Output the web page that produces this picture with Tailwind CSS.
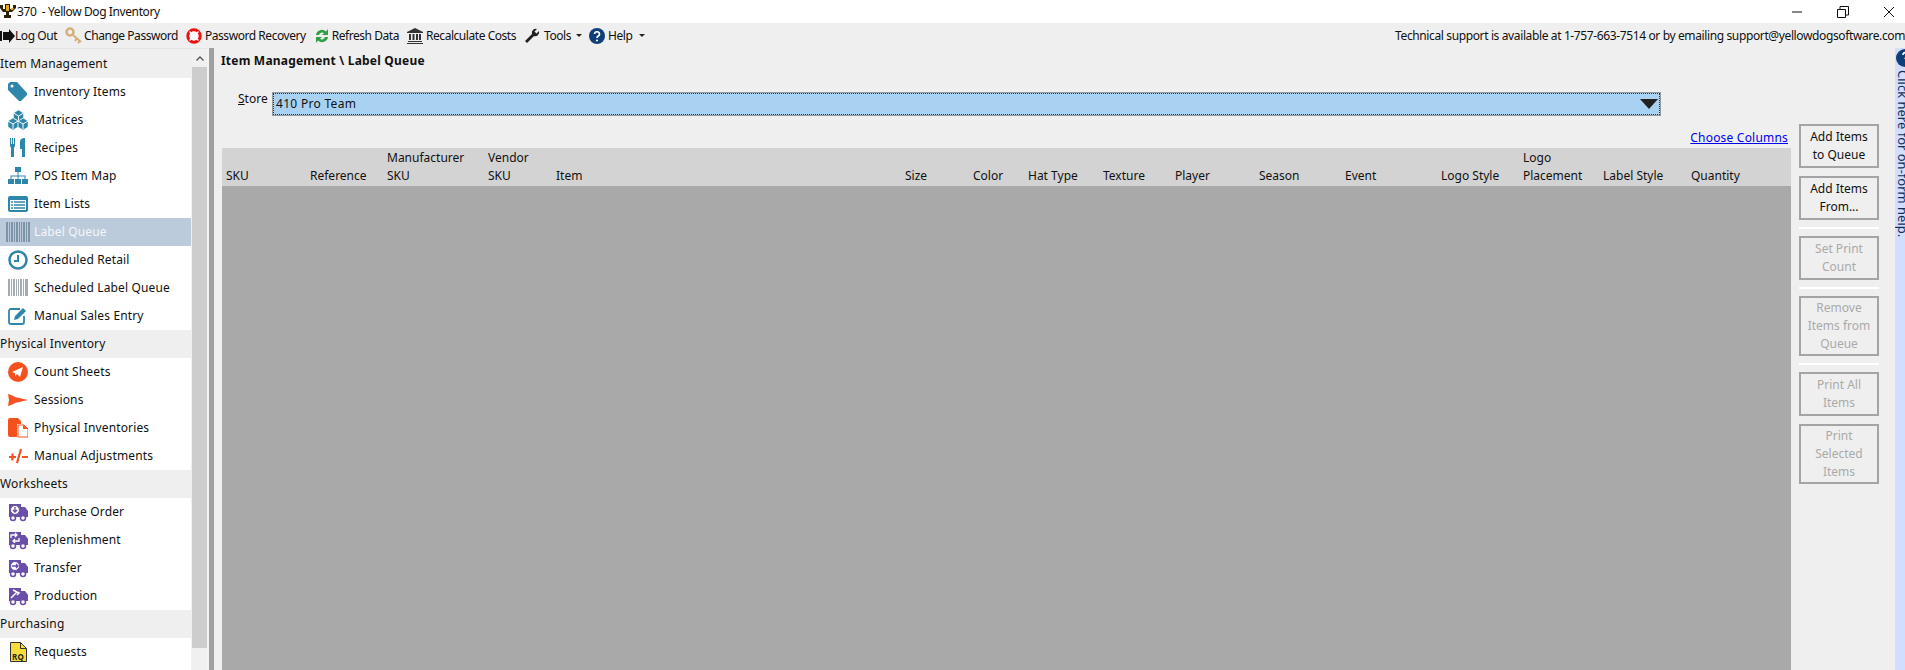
<!DOCTYPE html>
<html lang="en">
<head>
  <meta charset="UTF-8" />
  <title>370 - Yellow Dog Inventory</title>
  <script src="https://cdn.jsdelivr.net/npm/@tailwindcss/browser@4"></script>
</head>
<body class="h-[670px] w-[1905px] overflow-hidden bg-[#efefef] font-['Noto_Sans',sans-serif] text-[12px] leading-[16px] text-[#111]">

  <!-- title bar -->
  <div class="flex h-[23px] items-center bg-white">
    <svg class="h-[16px] w-[16px] shrink-0" viewBox="0 0 16 16"><path d="M0 1h3v4h2V0h5v5h3V1h3v3l-4 4h-3v3h2v3H4v-3h2V8H3L0 4z" fill="#2a2208"/><path d="M6 1h3v6H6z" fill="#e0a91c"/><path d="M11 4h3l-1 2h-2z" fill="#e0a91c"/></svg>
    <span class="ml-[1px] whitespace-pre tracking-[-0.4px]">370  - Yellow Dog Inventory</span>
    <div class="ml-auto flex h-full items-center">
      <svg class="mr-[34px] h-[12px] w-[12px]" viewBox="0 0 12 12"><path d="M1 6h10" stroke="#111" fill="none"/></svg>
      <svg class="mr-[34px] h-[12px] w-[12px]" viewBox="0 0 12 12"><path d="M.5 3.500h8v8h-8zM3 3V.5h8.500V9H9" stroke="#111" fill="none"/></svg>
      <svg class="mr-[10px] h-[12px] w-[12px]" viewBox="0 0 12 12"><path d="M1 1l10 10M11 1L1 11" stroke="#111" fill="none"/></svg>
    </div>
  </div>

  <!-- toolbar -->
  <div class="flex h-[25px] items-center whitespace-nowrap tracking-[-0.45px]">
    <div class="flex items-center">
      <svg class="h-[14px] w-[15px]" viewBox="0 0 15 14"><path d="M3 3h6V0l6 7-6 7v-3H3z" fill="#111"/><path d="M0 2h2v10H0z" fill="#111"/></svg>
      <span>Log Out</span>
    </div>
    <div class="ml-[8px] flex items-center gap-[2px]">
      <svg class="h-[17px] w-[17px]" viewBox="0 0 17 17"><circle cx="5" cy="5" r="3.500" fill="none" stroke="#d4b078" stroke-width="2.500"/><path d="M8 8l8 7M12 11l-2 3M15 14l-2 2" stroke="#d4b078" stroke-width="2" fill="none"/></svg>
      <span>Change Password</span>
    </div>
    <div class="ml-[8px] flex items-center gap-[3px]">
      <svg class="h-[16px] w-[16px]" viewBox="0 0 16 16"><circle cx="8" cy="8" r="6.200" fill="#fff" stroke="#ee1111" stroke-width="3"/><path d="M3.500 3.500l2 2M12.500 3.500l-2 2M3.500 12.500l2-2M12.500 12.500l-2-2" stroke="#fff" stroke-width="1.400"/></svg>
      <span>Password Recovery</span>
    </div>
    <div class="ml-[8px] flex items-center gap-[2px]">
      <svg class="h-[16px] w-[16px]" viewBox="0 0 16 16"><path d="M2 7a6 6 0 0 1 10-3.500L14 1v6H8l2-2a3.500 3.500 0 0 0-5 2z" fill="#2f9e44"/><path d="M14 9a6 6 0 0 1-10 3.500L2 15V9h6l-2 2a3.500 3.500 0 0 0 5-2z" fill="#2f9e44"/></svg>
      <span>Refresh Data</span>
    </div>
    <div class="ml-[8px] flex items-center gap-[3px]">
      <svg class="h-[16px] w-[16px]" viewBox="0 0 16 16"><path d="M8 0l8 4v1H0V4zM2 6h2v6H2zM5.500 6h2v6h-2zM9 6h2v6H9zM12 6h2v6h-2zM1 13h14v1H1zM0 15h16v1H0z" fill="#333"/></svg>
      <span>Recalculate Costs</span>
    </div>
    <div class="ml-[8px] flex items-center gap-[4px]">
      <svg class="h-[16px] w-[16px]" viewBox="0 0 16 16"><path d="M1 13l7-7a4 4 0 0 1 5-5l-2.500 2.500 2 2L15 3a4 4 0 0 1-5 5l-7 7z" fill="#222"/></svg>
      <span>Tools</span>
      <svg class="ml-[1px] h-[3px] w-[6px]" viewBox="0 0 6 3"><path d="M0 0h6L3 3z" fill="#222"/></svg>
    </div>
    <div class="ml-[7px] flex items-center gap-[3px]">
      <svg class="h-[16px] w-[16px]" viewBox="0 0 16 16"><circle cx="8" cy="8" r="8" fill="#0e3f78"/><path d="M5.500 6a2.500 2.300 0 1 1 3.800 2c-.9.6-1.300 1-1.300 2" fill="none" stroke="#fff" stroke-width="1.800"/><circle cx="8" cy="12.500" r="1.100" fill="#fff"/></svg>
      <span>Help</span>
      <svg class="ml-[4px] h-[3px] w-[6px]" viewBox="0 0 6 3"><path d="M0 0h6L3 3z" fill="#222"/></svg>
    </div>
    <span class="ml-auto tracking-[-0.375px]">Technical support is available at 1-757-663-7514 or by emailing support@yellowdogsoftware.com</span>
  </div>

  <div class="flex h-[622px]">
    <!-- left navigation -->
    <aside class="flex h-full w-[207px] shrink-0 border-t border-t-[#e4e4e4] bg-white">
      <nav class="w-[191px] shrink-0 tracking-[0.15px]">
        <div class="flex h-[29px] items-center bg-[#efefef]">Item Management</div>

        <a class="flex h-[28px] items-center">
          <svg class="ml-[8px] h-[20px] w-[20px]" viewBox="0 0 20 20"><path d="M0 2l2-2h7l10 11v2l-6 6h-2L0 8z" fill="#2f86ab"/><circle cx="4" cy="4" r="1.500" fill="#fff"/></svg>
          <span class="ml-[6px]">Inventory Items</span>
        </a>
        <a class="flex h-[28px] items-center">
          <svg class="ml-[8px] h-[20px] w-[20px]" viewBox="0 0 20 20"><path d="M5.500 3l5-3 5 3v5l-5 3-5-3zM0 11l5-3 5 3v6l-5 3-5-3zM10 11l5-3 5 3v6l-5 3-5-3z" fill="#2f86ab" stroke="#fff" stroke-width=".5"/><path d="M5.500 3l5 3 5-3M0 11l5 3 5-3M10 11l5 3 5-3M10.500 6v4M5 14v5M15 14v5" stroke="#fff" fill="none"/></svg>
          <span class="ml-[6px]">Matrices</span>
        </a>
        <a class="flex h-[28px] items-center">
          <svg class="ml-[8px] h-[20px] w-[20px]" viewBox="0 0 20 20"><path d="M2 0h1v6h1V0h1v6h1V0h1v8l-1 2v9H3v-9L2 8zM12 4c0-3 2-4 5-4v19h-3v-8h-2z" fill="#2f86ab"/></svg>
          <span class="ml-[6px]">Recipes</span>
        </a>
        <a class="flex h-[28px] items-center">
          <svg class="ml-[8px] h-[20px] w-[20px]" viewBox="0 0 20 20"><path d="M7 1h6v5h-6zM0 13h6v5H0zM7 13h6v5H7zM14 13h6v5h-6zM9.500 6h1v3.500h7V13h-1v-2.500h-6V13h-1v-2.500h-6V13h-1V9.500h7z" fill="#2f86ab"/></svg>
          <span class="ml-[6px]">POS Item Map</span>
        </a>
        <a class="flex h-[28px] items-center">
          <svg class="ml-[8px] h-[20px] w-[20px]" viewBox="0 0 20 20"><rect y="2" width="20" height="16" rx="2" fill="#2f86ab"/><path d="M2 6h16v10H2z" fill="#fff"/><path d="M3 8h2M3 11h2M3 14h2M6 8h11M6 11h11M6 14h11" stroke="#2f86ab" stroke-width="1.500"/></svg>
          <span class="ml-[6px]">Item Lists</span>
        </a>
        <a class="flex h-[28px] items-center bg-[#bccbdb] text-[#f4f6f8]">
          <svg class="ml-[6px] h-[20px] w-[24px]" viewBox="0 0 24 20"><path d="M0 0h2v20H0zM3 0h1v20H3zM5 0h2v20H5zM8 0h1v20H8zM10 0h2v20h-2zM13 0h1v20h-1zM15 0h1v20h-1zM17 0h2v20h-2zM20 0h1v20h-1zM22 0h2v20h-2z" fill="#7d93a8"/></svg>
          <span class="ml-[4px]">Label Queue</span>
        </a>
        <a class="flex h-[28px] items-center">
          <svg class="ml-[8px] h-[20px] w-[20px]" viewBox="0 0 20 20"><circle cx="10" cy="10" r="8.500" fill="none" stroke="#2f86ab" stroke-width="2.500"/><path d="M10 5v6H6" fill="none" stroke="#2f86ab" stroke-width="2"/></svg>
          <span class="ml-[6px]">Scheduled Retail</span>
        </a>
        <a class="flex h-[28px] items-center">
          <svg class="ml-[8px] h-[20px] w-[20px]" viewBox="0 0 20 20"><path d="M0 1h2v17H0zM3 1h1v17H3zM5 1h2v17H5zM8 1h1v17H8zM10 1h1v17h-1zM12 1h2v17h-2zM15 1h1v17h-1zM17 1h3v17h-3z" fill="#a3abb0"/></svg>
          <span class="ml-[6px]">Scheduled Label Queue</span>
        </a>
        <a class="flex h-[28px] items-center">
          <svg class="ml-[8px] h-[20px] w-[20px]" viewBox="0 0 20 20"><path d="M12 3H3a2 2 0 0 0-2 2v11a2 2 0 0 0 2 2h11a2 2 0 0 0 2-2v-6" fill="none" stroke="#2f86ab" stroke-width="1.800"/><path d="M6 14l1-4 8-8 3 3-8 8z" fill="#2f86ab"/></svg>
          <span class="ml-[6px]">Manual Sales Entry</span>
        </a>

        <div class="flex h-[28px] items-center bg-[#efefef]">Physical Inventory</div>

        <a class="flex h-[28px] items-center">
          <svg class="ml-[8px] h-[20px] w-[20px]" viewBox="0 0 20 20"><circle cx="10" cy="10" r="10" fill="#f4511e"/><path d="M4 10l11-5-3 10-3-3-2 2v-3z" fill="#fff"/></svg>
          <span class="ml-[6px]">Count Sheets</span>
        </a>
        <a class="flex h-[28px] items-center">
          <svg class="ml-[8px] h-[20px] w-[20px]" viewBox="0 0 20 20"><path d="M0 4l3 1 4 2 4 1 9 2-9 2-4 1-4 2-3 1 1-6z" fill="#f4511e"/></svg>
          <span class="ml-[6px]">Sessions</span>
        </a>
        <a class="flex h-[28px] items-center">
          <svg class="ml-[8px] h-[20px] w-[20px]" viewBox="0 0 20 20"><path d="M0 2a2 2 0 0 1 2-2h8l3 3v3H9v13H2a2 2 0 0 1-2-2z" fill="#f4511e"/><path d="M10 7h6l4 4v8H10z" fill="#fff" stroke="#f4511e"/><path d="M15 7v4h5z" fill="#f4511e"/></svg>
          <span class="ml-[6px]">Physical Inventories</span>
        </a>
        <a class="flex h-[28px] items-center">
          <svg class="ml-[8px] h-[20px] w-[20px]" viewBox="0 0 20 20"><path d="M1 11h7M4.500 7.500v7M9 17l4-14M14 11h6" stroke="#f4511e" stroke-width="2.200" fill="none"/></svg>
          <span class="ml-[6px]">Manual Adjustments</span>
        </a>

        <div class="flex h-[28px] items-center bg-[#efefef]">Worksheets</div>

        <a class="flex h-[28px] items-center">
          <svg class="ml-[8px] h-[20px] w-[20px]" viewBox="0 0 20 20"><path d="M1 2h12v3h4l3 4v6H1z" fill="#6a4fa8"/><circle cx="7" cy="8" r="4.500" fill="#fff" stroke="#6a4fa8"/><path d="M7 5v5M5 8l2 2 2-2" stroke="#6a4fa8" fill="none" stroke-width="1.300"/><circle cx="5" cy="16" r="2.500" fill="#fff" stroke="#6a4fa8" stroke-width="1.500"/><circle cx="15" cy="16" r="2.500" fill="#fff" stroke="#6a4fa8" stroke-width="1.500"/></svg>
          <span class="ml-[6px]">Purchase Order</span>
        </a>
        <a class="flex h-[28px] items-center">
          <svg class="ml-[8px] h-[20px] w-[20px]" viewBox="0 0 20 20"><path d="M1 2h12v3h4l3 4v6H1z" fill="#6a4fa8"/><path d="M3 8V5h6M7 3l2 2-2 2M11 8v3H5M7 9l-2 2 2 2" stroke="#fff" fill="none" stroke-width="1.300"/><circle cx="5" cy="16" r="2.500" fill="#fff" stroke="#6a4fa8" stroke-width="1.500"/><circle cx="15" cy="16" r="2.500" fill="#fff" stroke="#6a4fa8" stroke-width="1.500"/></svg>
          <span class="ml-[6px]">Replenishment</span>
        </a>
        <a class="flex h-[28px] items-center">
          <svg class="ml-[8px] h-[20px] w-[20px]" viewBox="0 0 20 20"><path d="M1 2h12v3h4l3 4v6H1z" fill="#6a4fa8"/><circle cx="7" cy="8" r="4.500" fill="#fff" stroke="#6a4fa8"/><path d="M4 8h6M8 6l2 2-2 2" stroke="#6a4fa8" fill="none" stroke-width="1.300"/><circle cx="5" cy="16" r="2.500" fill="#fff" stroke="#6a4fa8" stroke-width="1.500"/><circle cx="15" cy="16" r="2.500" fill="#fff" stroke="#6a4fa8" stroke-width="1.500"/></svg>
          <span class="ml-[6px]">Transfer</span>
        </a>
        <a class="flex h-[28px] items-center">
          <svg class="ml-[8px] h-[20px] w-[20px]" viewBox="0 0 20 20"><path d="M1 2h12v3h4l3 4v6H1z" fill="#6a4fa8"/><path d="M3 12l6-6M5 4l6 3-2 2" stroke="#fff" fill="none" stroke-width="1.500"/><circle cx="5" cy="16" r="2.500" fill="#fff" stroke="#6a4fa8" stroke-width="1.500"/><circle cx="15" cy="16" r="2.500" fill="#fff" stroke="#6a4fa8" stroke-width="1.500"/></svg>
          <span class="ml-[6px]">Production</span>
        </a>

        <div class="flex h-[28px] items-center bg-[#efefef]">Purchasing</div>

        <a class="flex h-[28px] items-center">
          <svg class="ml-[10px] h-[20px] w-[17px]" viewBox="0 0 17 20"><path d="M.5.500h10l6 6v13H.5z" fill="#f7dc3c" stroke="#333"/><path d="M10.500.500v6h6" fill="none" stroke="#333"/><text x="2" y="18" font-size="8" font-weight="700" fill="#222">RQ</text></svg>
          <span class="ml-[7px]">Requests</span>
        </a>
      </nav>

      <!-- sidebar scrollbar -->
      <div class="flex w-[16px] shrink-0 flex-col bg-[#f0f0f0] pl-[1px]">
        <div class="flex h-[18px] shrink-0 items-center justify-center">
          <svg class="h-[5px] w-[8px]" viewBox="0 0 8 5"><path d="M.5 4.500L4 1l3.500 3.500" fill="none" stroke="#555" stroke-width="1.300"/></svg>
        </div>
        <div class="h-[581px] w-[15px] bg-[#cdcdcd]"></div>
      </div>
    </aside>

    <!-- splitter -->
    <div class="h-full w-[2px] shrink-0 bg-[#f4f4f4]"></div>
    <div class="h-full w-[5px] shrink-0 bg-[#a0a0a0]"></div>

    <!-- main pane -->
    <main class="flex min-w-0 flex-1">
      <div class="flex w-[1578px] shrink-0 flex-col">
        <h1 class="mt-[5px] ml-[7px] h-[16px] text-[12px] font-bold tracking-[0.2px]">Item Management \ Label Queue</h1>

        <div class="mt-[24px] flex items-start">
          <label class="mt-[-2px] ml-[24px] w-[35px]"><span class="underline">S</span>tore</label>
          <div class="flex h-[22px] w-[1387px] items-center justify-between border border-dotted border-[#333] bg-[#a9d1f2] pr-[1px] pl-[2px] outline outline-[#999]">
            <span class="tracking-[0.3px]">410 Pro Team</span>
            <svg class="h-[10px] w-[18px]" viewBox="0 0 18 10"><path d="M0 0h18l-9 10z" fill="#222"/></svg>
          </div>
        </div>

        <div class="mt-[15px] mr-[4px] flex h-[18px] justify-end">
          <a class="tracking-[0.2px] text-[#0000ee] underline">Choose Columns</a>
        </div>

        <!-- grid header -->
        <div class="ml-[8px] grid h-[38px] w-[1569px] shrink-0 grid-cols-[84px_77px_101px_68px_349px_68px_55px_75px_72px_84px_86px_96px_82px_80px_88px_1fr] items-end bg-[#d3d3d3] pb-[2px] pl-[4px]">
          <span>SKU</span>
          <span>Reference</span>
          <span class="mb-[-1px] leading-[18px]">Manufacturer<br>SKU</span>
          <span class="mb-[-1px] leading-[18px]">Vendor<br>SKU</span>
          <span>Item</span>
          <span>Size</span>
          <span>Color</span>
          <span>Hat Type</span>
          <span>Texture</span>
          <span>Player</span>
          <span>Season</span>
          <span>Event</span>
          <span>Logo Style</span>
          <span class="mb-[-1px] leading-[18px]">Logo<br>Placement</span>
          <span>Label Style</span>
          <span>Quantity</span>
        </div>
        <div class="ml-[8px] w-[1569px] flex-1 bg-[#a9a9a9]"></div>
      </div>

      <!-- action buttons -->
      <div class="mt-[76px] ml-[7px] flex w-[80px] shrink-0 flex-col text-center leading-[18px]">
        <button class="h-[44px] border-2 border-[#a4a4a4]">Add Items<br>to Queue</button>
        <button class="mt-[8px] h-[44px] border-2 border-[#a4a4a4]">Add Items<br>From...</button>
        <div class="my-[7px] h-[2px] bg-white"></div>
        <button class="h-[44px] border-2 border-[#a4a4a4] text-[#aaa]">Set Print<br>Count</button>
        <div class="my-[7px] h-[2px] bg-white"></div>
        <button class="h-[60px] border-2 border-[#a4a4a4] text-[#aaa]">Remove<br>Items from<br>Queue</button>
        <div class="my-[7px] h-[2px] bg-white"></div>
        <button class="h-[44px] border-2 border-[#a4a4a4] text-[#aaa]">Print All<br>Items</button>
        <button class="mt-[8px] h-[60px] border-2 border-[#a4a4a4] text-[#aaa]">Print<br>Selected<br>Items</button>
      </div>

      <!-- on-form help strip -->
      <div class="ml-[16px] flex h-full w-[10px] shrink-0 flex-col items-start overflow-hidden bg-[#d2deff]">
        <svg class="h-[20px] w-[18px] shrink-0" viewBox="0 0 18 20"><circle cx="10" cy="10" r="9" fill="#0e3f78"/><path d="M8 7a2.500 2.300 0 1 1 3.500 2c-.9.6-1.300 1-1.300 2" fill="none" stroke="#fff" stroke-width="1.600"/></svg>
        <span class="mt-[2px] w-[16px] shrink-0 whitespace-nowrap text-[13px] text-[#12305c] [writing-mode:vertical-rl]">Click here for on-form help.</span>
      </div>
    </main>
  </div>
</body>
</html>
